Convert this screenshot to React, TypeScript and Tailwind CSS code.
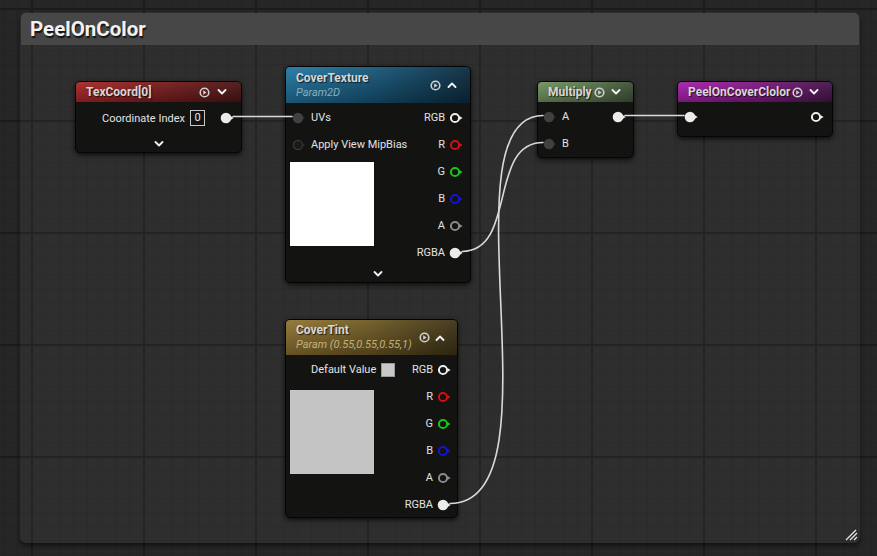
import React from 'react';

type PinKind = 'out' | 'ring' | 'in' | 'inDark';

const Pin = ({ kind, color = '#ececec' }: { kind: PinKind; color?: string }) => {
  if (kind === 'out') {
    return (
      <svg width="14" height="12" viewBox="0 0 14 12" className="shrink-0">
        <circle cx="6" cy="6" r="5.3" fill={color} />
        <path d="M10.6 4.1 L13.6 6 L10.6 7.9 Z" fill={color} />
      </svg>
    );
  }
  if (kind === 'ring') {
    return (
      <svg width="14" height="12" viewBox="0 0 14 12" className="shrink-0">
        <circle cx="6" cy="6" r="4.1" fill="none" stroke={color} strokeWidth="2" />
        <path d="M10.4 4 L13.6 6 L10.4 8 Z" fill={color} />
      </svg>
    );
  }
  if (kind === 'inDark') {
    return (
      <svg width="14" height="12" viewBox="0 0 14 12" className="shrink-0">
        <circle cx="6" cy="6" r="4.6" fill="#1a1a1a" stroke="#3a3a3a" strokeWidth="1.2" />
        <path d="M10.8 4.6 L12.8 6 L10.8 7.4 Z" fill="#2e2e2e" />
      </svg>
    );
  }
  return (
    <svg width="14" height="12" viewBox="0 0 14 12" className="shrink-0">
      <circle cx="6" cy="6" r="5.2" fill="#414141" />
      <path d="M10.6 4.4 L12.9 6 L10.6 7.6 Z" fill="#353535" />
    </svg>
  );
};

const PlayIcon = () => (
  <svg width="11" height="11" viewBox="0 0 11 11" className="shrink-0">
    <circle cx="5.5" cy="5.5" r="4.3" fill="none" stroke="#d0d0d0" strokeWidth="1.6" />
    <path d="M4.2 3.3 L7.6 5.5 L4.2 7.7 Z" fill="#d0d0d0" />
  </svg>
);

const Chevron = ({ up }: { up?: boolean }) => (
  <svg width="10" height="8" viewBox="0 0 10 8" className="shrink-0">
    <polyline
      points={up ? '1.5,6 5,2.5 8.5,6' : '1.5,2 5,5.5 8.5,2'}
      fill="none"
      stroke="#f0f0f0"
      strokeWidth="1.9"
      strokeLinecap="round"
      strokeLinejoin="round"
    />
  </svg>
);

const label = 'text-[11px] leading-none text-[#e2e2e2] whitespace-nowrap';
const title = 'text-[12px] leading-[14px] font-bold text-[#d6d6d6] [text-shadow:1px_1px_1px_rgba(0,0,0,0.7)] whitespace-nowrap';
const nodeBox =
  'absolute flex flex-col rounded-[5px] border border-[#050505] bg-[#131412] overflow-hidden shadow-[0_2px_5px_rgba(0,0,0,0.7)]';

const OutRow = ({ text, kind, color }: { text: string; kind: PinKind; color?: string }) => (
  <div className="h-[27px] flex items-center justify-end gap-[4px]">
    <span className={label}>{text}</span>
    <Pin kind={kind} color={color} />
  </div>
);

const App: React.FC = () => {
  return (
    <div className="relative w-[877px] h-[556px] overflow-hidden bg-[#262626] bg-[linear-gradient(to_right,#1b1b1b_2px,transparent_2px),linear-gradient(to_bottom,#1b1b1b_2px,transparent_2px),linear-gradient(to_right,#232323_1px,transparent_1px),linear-gradient(to_bottom,#232323_1px,transparent_1px)] [background-size:112px_112px,112px_112px,14px_14px,14px_14px] [background-position:31px_8px,31px_8px,3px_8px,3px_8px] pt-[12px] [font-family:Roboto,'Liberation_Sans',sans-serif]">
      {/* comment box */}
      <div className="ml-[20px] w-[840px] h-[531px] rounded-[6px] bg-white/[0.035] shadow-[0_3px_4px_rgba(0,0,0,0.5)] flex flex-col">
        <div className="mx-[1px] mt-[1px] h-[32px] rounded-t-[5px] bg-[#474747] flex items-center pl-[9px]">
          <span className="text-[20.5px] font-bold text-[#f2f2f2] [text-shadow:1px_2px_1px_rgba(0,0,0,0.75)]">PeelOnColor</span>
        </div>
        <div className="flex-1" />
        <div className="flex justify-end pr-[2px] pb-[2px]">
          <svg width="13" height="12" viewBox="0 0 13 12">
            <path d="M1 11 L11 1 M5 11 L12 4 M9 11 L12 8" stroke="#e8e8e8" strokeWidth="1.3" />
          </svg>
        </div>
      </div>

      {/* TexCoord[0] */}
      <div className={`${nodeBox} left-[75px] top-[81px] w-[167px] h-[72px]`}>
        <div className="h-[20px] shrink-0 flex items-center pl-[10px] pr-[14px] bg-[linear-gradient(to_bottom,rgba(255,255,255,0.06),rgba(0,0,0,0.25)),linear-gradient(to_right,#a82626,#7e1c1c_45%,#4a1414)]">
          <span className={title}>TexCoord[0]</span>
          <div className="ml-auto flex items-center gap-[7px]">
            <PlayIcon />
            <Chevron />
          </div>
        </div>
        <div className="pt-[4px] flex flex-col">
          <div className="h-[24px] flex items-center justify-end pr-[7px]">
            <span className={label}>Coordinate Index</span>
            <div className="ml-[5px] w-[15px] h-[16px] border border-[#c8c8c8] flex items-center justify-center text-[11px] text-[#e6e6e6]">0</div>
            <div className="ml-[15px]">
              <Pin kind="out" />
            </div>
          </div>
          <div className="mt-[6px] h-[16px] flex items-center justify-center">
            <Chevron />
          </div>
        </div>
      </div>

      {/* CoverTexture */}
      <div className={`${nodeBox} left-[285px] top-[66px] w-[186px] h-[217px]`}>
        <div className="h-[36px] shrink-0 flex items-center pl-[10px] pr-[13px] bg-[linear-gradient(to_bottom,rgba(255,255,255,0.05),rgba(0,0,0,0.3)),linear-gradient(to_right,#2479a5,#175a7d_45%,#0c2c40)]">
          <div className="flex flex-col">
            <span className={title}>CoverTexture</span>
            <span className="text-[11px] leading-[15px] italic text-[#86aebd] whitespace-nowrap">Param2D</span>
          </div>
          <div className="ml-auto flex items-center gap-[6px]">
            <PlayIcon />
            <Chevron up />
          </div>
        </div>
        <div className="flex justify-between">
          <div className="flex flex-col pt-[1px]">
            <div className="h-[27px] flex items-center pl-[6px] gap-[5px]">
              <Pin kind="in" />
              <span className={label}>UVs</span>
            </div>
            <div className="h-[27px] flex items-center pl-[6px] gap-[5px]">
              <Pin kind="inDark" />
              <span className={label}>Apply View MipBias</span>
            </div>
            <div className="mt-[4px] ml-[4px] w-[84px] h-[84px] bg-white" />
          </div>
          <div className="flex flex-col pt-[1px] pr-[7px]">
            <OutRow text="RGB" kind="ring" />
            <OutRow text="R" kind="ring" color="#d40f0f" />
            <OutRow text="G" kind="ring" color="#14c814" />
            <OutRow text="B" kind="ring" color="#1414d2" />
            <OutRow text="A" kind="ring" color="#8c8c8c" />
            <OutRow text="RGBA" kind="out" />
          </div>
        </div>
        <div className="h-[16px] flex items-center justify-center">
          <Chevron />
        </div>
      </div>

      {/* CoverTint */}
      <div className={`${nodeBox} left-[285px] top-[319px] w-[173px] h-[199px]`}>
        <div className="h-[35px] shrink-0 flex items-center pl-[10px] pr-[12px] bg-[linear-gradient(to_bottom,rgba(255,255,255,0.05),rgba(0,0,0,0.3)),linear-gradient(to_right,#927532,#6f5a24_50%,#3f3418)]">
          <div className="flex flex-col">
            <span className={title}>CoverTint</span>
            <span className="text-[11px] leading-[15px] italic text-[#c2b07c] whitespace-nowrap">Param (0.55,0.55,0.55,1)</span>
          </div>
          <div className="ml-auto flex items-center gap-[5px]">
            <PlayIcon />
            <Chevron up />
          </div>
        </div>
        <div className="flex justify-between">
          <div className="flex flex-col pt-[1px]">
            <div className="h-[27px] flex items-center pl-[25px]">
              <span className={label}>Default Value</span>
              <div className="ml-[5px] w-[14px] h-[14px] bg-[#c8c8c8] border border-[#9a9a9a]" />
            </div>
            <div className="mt-[7px] ml-[4px] w-[84px] h-[84px] bg-[#c4c4c4]" />
          </div>
          <div className="flex flex-col pt-[1px] pr-[6px]">
            <OutRow text="RGB" kind="ring" />
            <OutRow text="R" kind="ring" color="#d40f0f" />
            <OutRow text="G" kind="ring" color="#14c814" />
            <OutRow text="B" kind="ring" color="#1414d2" />
            <OutRow text="A" kind="ring" color="#8c8c8c" />
            <OutRow text="RGBA" kind="out" />
          </div>
        </div>
      </div>

      {/* Multiply */}
      <div className={`${nodeBox} left-[537px] top-[81px] w-[97px] h-[77px]`}>
        <div className="h-[20px] shrink-0 flex items-center pl-[10px] pr-[12px] bg-[linear-gradient(to_bottom,rgba(255,255,255,0.06),rgba(0,0,0,0.25)),linear-gradient(to_right,#71925f,#5b774d_50%,#3d4f36)]">
          <span className={title}>Multiply</span>
          <div className="ml-auto flex items-center gap-[6px]">
            <PlayIcon />
            <Chevron />
          </div>
        </div>
        <div className="flex justify-between pt-[1px]">
          <div className="flex flex-col">
            <div className="h-[27px] flex items-center pl-[5px] gap-[5px]">
              <Pin kind="in" />
              <span className={label}>A</span>
            </div>
            <div className="h-[27px] flex items-center pl-[5px] gap-[5px]">
              <Pin kind="in" />
              <span className={label}>B</span>
            </div>
          </div>
          <div className="h-[27px] flex items-center pr-[7px]">
            <Pin kind="out" />
          </div>
        </div>
      </div>

      {/* PeelOnCoverClolor */}
      <div className={`${nodeBox} left-[677px] top-[81px] w-[156px] h-[56px]`}>
        <div className="h-[20px] shrink-0 flex items-center pl-[10px] pr-[13px] bg-[linear-gradient(to_bottom,rgba(255,255,255,0.06),rgba(0,0,0,0.25)),linear-gradient(to_right,#a61fa8,#7f1883_50%,#431447)]">
          <span className={title}>PeelOnCoverClolor</span>
          <div className="ml-auto flex items-center gap-[6px]">
            <PlayIcon />
            <Chevron />
          </div>
        </div>
        <div className="h-[27px] mt-[1px] flex items-center justify-between pl-[6px] pr-[8px]">
          <Pin kind="out" />
          <Pin kind="ring" />
        </div>
      </div>

      {/* wires */}
      <svg className="absolute left-0 top-0 pointer-events-none" width="877" height="556" viewBox="0 0 877 556">
        <g fill="none" stroke="#dadada" strokeWidth="1.6" strokeLinecap="round">
          <path d="M233 116.5 L292 116.5" />
          <path d="M625 115.5 L684 115.5" />
          <path d="M462 251.5 C 517 251.5, 488 142.5, 543 142.5" />
          <path d="M450 503.5 C 565 503.5, 440 115.5, 543 115.5" />
        </g>
      </svg>
    </div>
  );
};

export default App;
